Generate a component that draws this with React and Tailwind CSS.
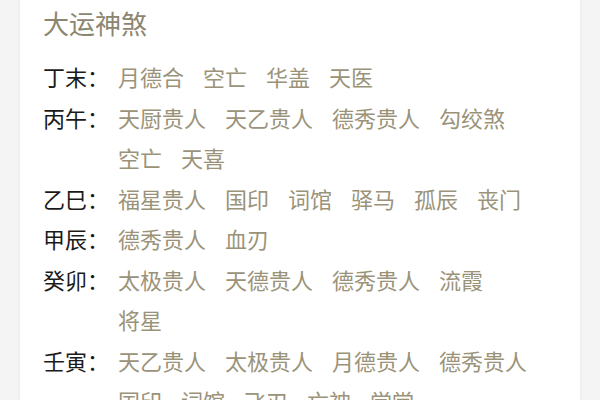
const rows = [
  { label: '丁末', items: ['月德合', '空亡', '华盖', '天医'] },
  { label: '丙午', items: ['天厨贵人', '天乙贵人', '德秀贵人', '勾绞煞', '空亡', '天喜'] },
  { label: '乙巳', items: ['福星贵人', '国印', '词馆', '驿马', '孤辰', '丧门'] },
  { label: '甲辰', items: ['德秀贵人', '血刃'] },
  { label: '癸卯', items: ['太极贵人', '天德贵人', '德秀贵人', '流霞', '将星'] },
  { label: '壬寅', items: ['天乙贵人', '太极贵人', '月德贵人', '德秀贵人', '国印', '词馆', '飞刃', '亡神', '学堂'] },
];

export default function App() {
  return (
    <div className="w-[600px] h-[400px] overflow-hidden bg-[#f4f4f4] font-['Noto_Sans_CJK_SC',sans-serif]">
      <div className="ml-[20px] w-[560px] h-[420px] bg-white shadow-[0_0_4px_rgba(0,0,0,0.06)] pl-[23px] pr-[43px] pt-[3px]">
        <h2 className="text-[26px] leading-[40px] text-[#8c8670] font-normal">大运神煞</h2>
        <div className="mt-[13px]">
          {rows.map(row => (
            <div key={row.label} className="flex text-[22px] leading-[40.5px]">
              <span className="w-[75px] shrink-0 text-[#1a1a1a]">{row.label}：</span>
              <div className="flex flex-wrap gap-x-[19px] text-[#9a9379]">
                {row.items.map((it, i) => (
                  <span key={i}>{it}</span>
                ))}
              </div>
            </div>
          ))}
        </div>
      </div>
    </div>
  );
}
